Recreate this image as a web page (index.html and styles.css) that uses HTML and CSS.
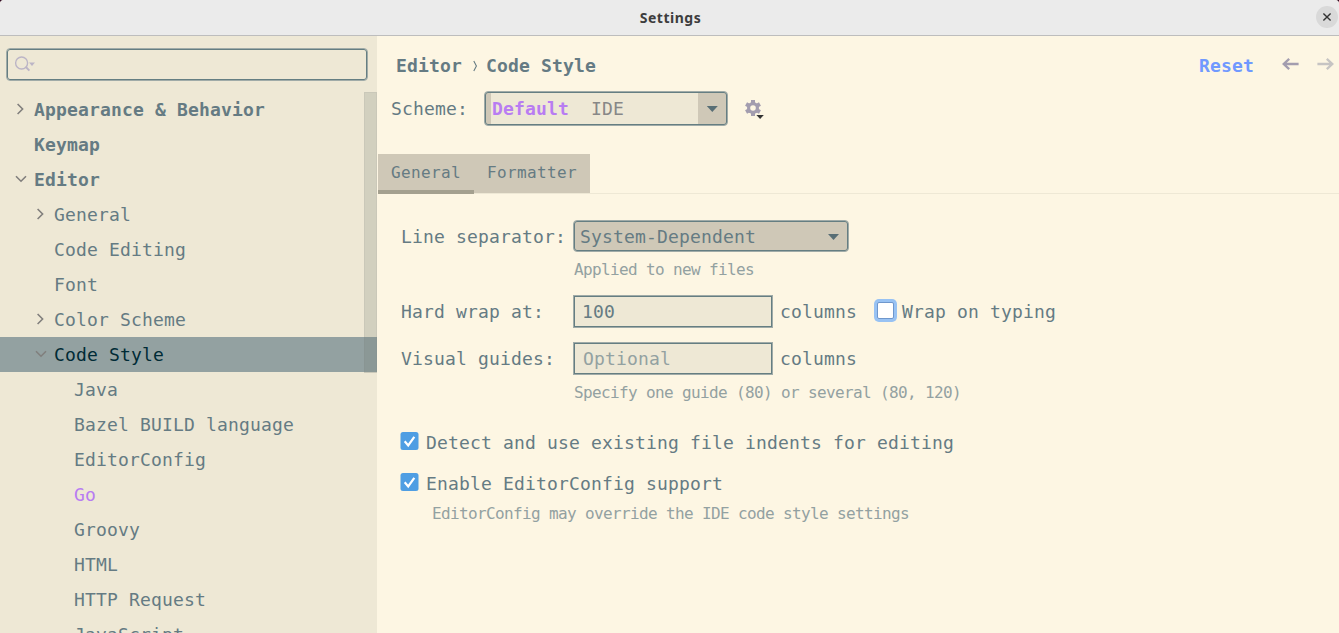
FILE: index.html
```
<!DOCTYPE html>
<html lang="en">
<head>
<meta charset="utf-8">
<title>Settings</title>
<link rel="stylesheet" href="styles.css">
</head>
<body>
<div class="window">
  <header class="titlebar">
    <span class="title">Settings</span>
    <button class="close" aria-label="Close"><svg width="22" height="22" viewBox="0 0 22 22"><path d="M7.4 7.4l7.2 7.2M14.6 7.4l-7.2 7.2" stroke="#333" stroke-width="1.4"/></svg></button>
  </header>
  <div class="body">
    <aside class="sidebar">
      <div class="search"><svg width="24" height="20" viewBox="0 0 24 20"><circle cx="7.6" cy="8" r="6" fill="none" stroke="#bcb5c6" stroke-width="1.4"/><path d="M11.6 11.8l3.8 3.8" stroke="#bcb5c6" stroke-width="2"/><path d="M15 7.6h6l-3 3.4z" fill="#bcb5c6"/></svg></div>
      <nav class="tree">
        <div class="row top"><svg class="arrow" viewBox="0 0 12 12"><path d="M2.6 1L7.6 6 2.6 11"/></svg>Appearance &amp; Behavior</div>
        <div class="row top">Keymap</div>
        <div class="row top"><svg class="arrow" viewBox="0 0 12 12"><path d="M1 3.2L6 8.2l5-5"/></svg>Editor</div>
        <div class="row sub"><svg class="arrow" viewBox="0 0 12 12"><path d="M2.6 1L7.6 6 2.6 11"/></svg>General</div>
        <div class="row sub">Code Editing</div>
        <div class="row sub">Font</div>
        <div class="row sub"><svg class="arrow" viewBox="0 0 12 12"><path d="M2.6 1L7.6 6 2.6 11"/></svg>Color Scheme</div>
        <div class="row sub selected"><svg class="arrow" viewBox="0 0 12 12"><path d="M1 3.2L6 8.2l5-5"/></svg>Code Style</div>
        <div class="row leaf">Java</div>
        <div class="row leaf">Bazel BUILD language</div>
        <div class="row leaf">EditorConfig</div>
        <div class="row leaf modified">Go</div>
        <div class="row leaf">Groovy</div>
        <div class="row leaf">HTML</div>
        <div class="row leaf">HTTP Request</div>
        <div class="row leaf">JavaScript</div>
        <div class="scrollbar"></div>
      </nav>
    </aside>
    <main class="content">
      <div class="crumbs">
        <span>Editor</span>
        <svg class="crumb-sep" width="6" height="12" viewBox="0 0 6 12"><path d="M1.8 1l2.6 5-2.6 5" fill="none" stroke="#657b83" stroke-width="1.1"/></svg>
        <span>Code Style</span>
        <span class="reset">Reset</span>
        <svg class="back" width="18" height="14" viewBox="0 0 18 14"><path d="M16.6 7H2M7.2 1.8L1.7 7l5.5 5.2" fill="none" stroke="#a39daf" stroke-width="2.3"/></svg>
        <svg class="forward" width="18" height="14" viewBox="0 0 18 14"><path d="M.4 7h15M9.8 1.8L15.3 7l-5.5 5.2" fill="none" stroke="#c6c4c3" stroke-width="2.3"/></svg>
      </div>
      <div class="scheme">
        <span>Scheme:</span>
        <div class="box scheme-select">
          <div class="scheme-value"><b>Default</b><span>IDE</span></div>
          <svg class="caret" width="12" height="6" viewBox="0 0 12 6"><path d="M.8 0h11L6.3 6z" fill="#586e75"/></svg>
        </div>
        <svg class="gear" width="22" height="22" viewBox="0 0 22 22"><g transform="translate(9 9)"><g fill="#a39daf"><rect x="-2" y="-8" width="4" height="16"/><rect x="-2" y="-8" width="4" height="16" transform="rotate(60)"/><rect x="-2" y="-8" width="4" height="16" transform="rotate(120)"/><circle r="6"/></g><circle r="2.8" fill="#fdf6e3"/></g><path d="M12.4 16h7.4l-3.7 4z" fill="#333"/></svg>
      </div>
      <div class="tabs"><div class="tab active">General</div><div class="tab second">Formatter</div></div>
      <section class="form">
        <div class="field line">
          <span class="label">Line separator:</span>
          <div class="box select"><span>System-Dependent</span><svg class="caret" width="12" height="6" viewBox="0 0 12 6"><path d="M0 0h11L5.5 6z" fill="#586e75"/></svg></div>
        </div>
        <div class="hint indent">Applied to new files</div>
        <div class="field wrap">
          <span class="label">Hard wrap at:</span>
          <div class="box input">100</div>
          <span class="unit">columns</span>
          <span class="check-focus"></span>
          <span>Wrap on typing</span>
        </div>
        <div class="field guides">
          <span class="label">Visual guides:</span>
          <div class="box input placeholder">Optional</div>
          <span class="unit">columns</span>
        </div>
        <div class="hint indent">Specify one guide (80) or several (80, 120)</div>
        <div class="field detect"><svg class="check" viewBox="0 0 19 18"><rect x=".5" width="18" height="18" rx="2.5"/><path d="M4.7 9.3l3.5 4.1L14.3 4.8"/></svg><span>Detect and use existing file indents for editing</span></div>
        <div class="field support"><svg class="check" viewBox="0 0 19 18"><rect x=".5" width="18" height="18" rx="2.5"/><path d="M4.7 9.3l3.5 4.1L14.3 4.8"/></svg><span>Enable EditorConfig support</span></div>
        <div class="hint override">EditorConfig may override the IDE code style settings</div>
      </section>
    </main>
  </div>
</div>
</body>
</html>
```
FILE: styles.css
```
* { box-sizing: border-box; }
body {
  margin: 0;
  background: #300a24;
  color: #657b83;
  font: 18px "DejaVu Sans Mono", monospace;
  letter-spacing: 0.163px;
}
svg { display: block; flex: none; }
.window {
  height: 633px;
  display: flex;
  flex-direction: column;
  overflow: hidden;
  border-radius: 4px 4px 0 0;
  background: #fdf6e3;
}
.titlebar {
  position: relative;
  height: 36px;
  flex: none;
  background: #ebebeb;
  border-bottom: 1px solid #bdbdbd;
  text-align: center;
}
.title {
  font: bold 14px/36px "Noto Sans", sans-serif;
  letter-spacing: 0.5px;
  padding-left: 2px;
  color: #3d3d3d;
}
.close {
  position: absolute;
  top: 6px;
  right: 1px;
  width: 22px;
  height: 22px;
  padding: 0;
  border: 0;
  border-radius: 50%;
  background: #d9d9d9;
}
.body { flex: 1; min-height: 0; display: flex; }
.sidebar {
  width: 377px;
  flex: none;
  padding-top: 12px;
  background: #eee8d5;
  overflow: hidden;
}
.search {
  height: 33px;
  margin: 0 9px 11px 6px;
  padding: 6px 0 0 7px;
  border: 1px solid #a0aba8;
  border-radius: 4px;
  box-shadow: inset 0 0 0 1px #657e82;
}
.tree { position: relative; }
.row { display: flex; height: 35px; line-height: 35px; white-space: pre; position: relative; }
.top { padding-left: 34px; font-weight: bold; }
.sub { padding-left: 54px; }
.leaf { padding-left: 74px; }
.modified { color: #b87cf2; }
.selected { background: #93a1a1; color: #002b36; }
.arrow {
  width: 12px;
  height: 12px;
  margin: 11px 7px 0 -19px;
  fill: none;
  stroke: #817f7d;
  stroke-width: 1.6;
}
.scrollbar {
  position: absolute;
  top: 0;
  right: 0;
  width: 13px;
  height: 281px;
  background: rgba(115, 121, 115, 0.22);
  border: 1px solid rgba(115, 121, 115, 0.08);
}
.content { flex: 1; padding: 12px 0 0 1px; }
.crumbs {
  display: flex;
  align-items: center;
  height: 35px;
  padding: 0 4px 0 18px;
  font-weight: bold;
}
.crumb-sep { margin: 0 8px 0 10px; }
.reset { margin-left: auto; color: #7099ff; }
.back { margin: -3px 17px 0 28px; }
.forward { margin: -3px 0 0; }
.scheme { display: flex; height: 35px; margin-top: 8px; padding-left: 13px; line-height: 35px; }
.box { border: 1px solid #a0aba8; box-shadow: inset 0 0 0 1px #657e82; white-space: pre; }
.scheme-select {
  display: flex;
  width: 244px;
  height: 35px;
  margin-left: 16px;
  padding: 1px 7px 1px 6px;
  border-radius: 4px;
  background: #cfc8b7;
}
.scheme-value {
  flex: none;
  display: flex;
  gap: 22px;
  width: 207px;
  height: 31px;
  padding-left: 1px;
  background: #eee8d5;
  line-height: 31px;
  color: #878787;
}
.scheme-value b { color: #b87cf2; }
.scheme-select .caret { margin: 13px 0 0 8px; }
.gear { margin: 8px 0 0 16px; }
.tabs {
  display: flex;
  height: 40px;
  margin-top: 28px;
  border-bottom: 1px solid #eee8d5;
  font-size: 16px;
  line-height: 37px;
  letter-spacing: 0.367px;
}
.tab { width: 96px; height: 39px; padding-left: 13px; background: #cfc8b7; }
.active { height: 40px; border-bottom: 4px solid #a4a08f; }
.second { width: 116px; }
.form { padding: 26px 0 0 23px; line-height: 33px; }
.field { display: flex; height: 33px; }
.label { width: 172px; }
.select {
  display: flex;
  width: 276px;
  height: 32px;
  padding: 0 8px 0 6px;
  justify-content: space-between;
  border-radius: 4px;
  background: #cfc8b7;
  line-height: 31px;
}
.select .caret { margin-top: 13px; }
.hint { height: 33px; font-size: 16px; letter-spacing: -0.633px; color: #93a1a1; }
.indent { padding-left: 173px; }
.wrap { margin-top: 9px; }
.input { width: 200px; padding-left: 8px; background: #eee8d5; line-height: 31px; }
.placeholder { padding-left: 9px; color: #93a1a1; }
.unit { margin-left: 7px; }
.check-focus {
  width: 17px;
  height: 17px;
  margin: 7px 8px 0 20px;
  border: 1px solid #6f97cc;
  border-radius: 2px;
  background: #fff;
  box-shadow: 0 0 0 3px #98c2f3;
}
.guides { margin-top: 14px; }
.guides + .hint { margin-top: 1px; }
.detect { margin-top: 17px; }
.support { margin-top: 8px; }
.check {
  width: 19px;
  height: 18px;
  margin: 6px 7px 0 -1px;
  fill: none;
  stroke: #fff;
  stroke-width: 2.2;
}
.check rect { fill: #4f9ee3; stroke: none; }
.override { margin-top: -3px; padding-left: 31px; }
```
